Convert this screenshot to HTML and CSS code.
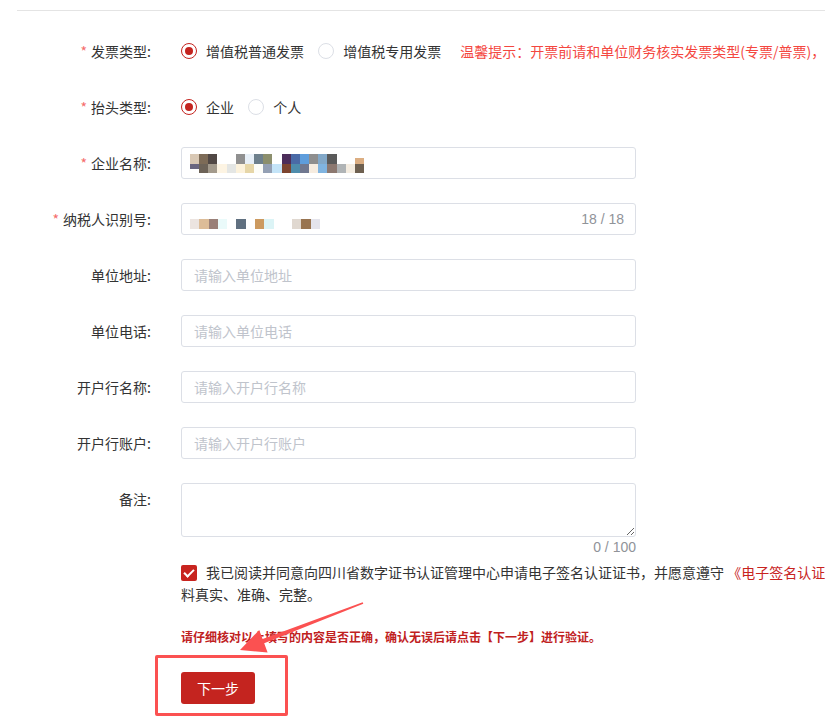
FILE: index.html
```html
<!DOCTYPE html>
<html lang="zh-CN">
<head>
    <meta charset="UTF-8">
    <meta name="viewport" content="width=device-width, initial-scale=1.0">
    <title>开具发票</title>
    <link rel="stylesheet" href="styles.css">
</head>
<body>
<div class="page">
    <div class="tabs-line"></div>

    <form class="invoice-form">
        <div class="form-item">
            <label class="form-label required">发票类型:</label>
            <div class="form-control nowrap">
                <label class="radio checked"><span class="radio-dot"></span>增值税普通发票</label>
                <label class="radio"><span class="radio-dot"></span>增值税专用发票</label>
                <span class="tip">温馨提示：开票前请和单位财务核实发票类型(专票/普票)，以免开错发票。</span>
            </div>
        </div>

        <div class="form-item">
            <label class="form-label required">抬头类型:</label>
            <div class="form-control nowrap">
                <label class="radio checked"><span class="radio-dot"></span>企业</label>
                <label class="radio"><span class="radio-dot"></span>个人</label>
            </div>
        </div>

        <div class="form-item">
            <label class="form-label required">企业名称:</label>
            <div class="form-control">
                <!-- 已打码的企业名称 -->
                <div class="input masked">
                    <svg class="mosaic" width="174" height="19" viewBox="0 0 19 2" preserveAspectRatio="none" shape-rendering="crispEdges">
                        <rect x="0" y="0" width="1" height="1" fill="#d9c8b4"/>
                        <rect x="1" y="0" width="1" height="1" fill="#7d6b57"/>
                        <rect x="2" y="0" width="1" height="1" fill="#514845"/>
                        <rect x="5" y="0" width="1" height="1" fill="#909090"/>
                        <rect x="6" y="0" width="1" height="1" fill="#e8f0f8"/>
                        <rect x="7" y="0" width="1" height="1" fill="#6e808c"/>
                        <rect x="8" y="0" width="1" height="1" fill="#8c8f6d"/>
                        <rect x="10" y="0" width="1" height="1" fill="#4c2d5a"/>
                        <rect x="11" y="0" width="1" height="1" fill="#4a6aa6"/>
                        <rect x="12" y="0" width="1" height="1" fill="#5e9ddc"/>
                        <rect x="13" y="0" width="1" height="1" fill="#8e8e8e"/>
                        <rect x="14" y="0" width="1" height="1" fill="#82a8c8"/>
                        <rect x="15" y="0" width="1" height="1" fill="#5a5a5a"/>
                        <rect x="18" y="0.4" width="1" height="0.6" fill="#dcae82"/>
                        <rect x="0" y="1" width="1" height="0.6" fill="#6a6680"/>
                        <rect x="1" y="1" width="1" height="1" fill="#6d6358"/>
                        <rect x="2" y="1" width="1" height="1" fill="#a39a8c"/>
                        <rect x="3" y="1" width="1" height="1" fill="#fdf4e3"/>
                        <rect x="4" y="1" width="1" height="1" fill="#e4e6e4"/>
                        <rect x="5" y="1" width="1" height="1" fill="#fcf2dc"/>
                        <rect x="6" y="1" width="1" height="1" fill="#e6d6a8"/>
                        <rect x="7" y="1" width="1" height="1" fill="#fdfdf8"/>
                        <rect x="8" y="1" width="1" height="1" fill="#94a0b4"/>
                        <rect x="9" y="1" width="1" height="1" fill="#c4e4f8"/>
                        <rect x="10" y="1" width="1" height="1" fill="#7c4430"/>
                        <rect x="11" y="1" width="1" height="1" fill="#4e8cac"/>
                        <rect x="12" y="1" width="1" height="1" fill="#707890"/>
                        <rect x="13" y="1" width="1" height="1" fill="#f6ece0"/>
                        <rect x="14" y="1" width="1" height="1" fill="#80b4e0"/>
                        <rect x="15" y="1" width="1" height="1" fill="#8c7870"/>
                        <rect x="16" y="1" width="1" height="1" fill="#b0b4b6"/>
                        <rect x="17" y="1" width="1" height="1" fill="#f4ece0"/>
                        <rect x="18" y="1" width="1" height="1" fill="#6e6050"/>
                    </svg>
                </div>
            </div>
        </div>

        <div class="form-item">
            <label class="form-label required">纳税人识别号:</label>
            <div class="form-control">
                <div class="input masked">
                    <svg class="mosaic" width="130" height="20" viewBox="0 0 14 2" preserveAspectRatio="none" shape-rendering="crispEdges">
                        <rect x="0" y="1" width="1" height="1" fill="#ece4e0"/>
                        <rect x="1" y="1" width="1" height="1" fill="#dcbc98"/>
                        <rect x="2" y="1" width="1" height="1" fill="#9a8078"/>
                        <rect x="3" y="1" width="1" height="1" fill="#eafafa"/>
                        <rect x="5" y="1" width="1" height="1" fill="#607080"/>
                        <rect x="7" y="1" width="1" height="1" fill="#cc9a60"/>
                        <rect x="8" y="1" width="1" height="1" fill="#dcf4f6"/>
                        <rect x="11" y="1" width="1" height="1" fill="#e0d8d0"/>
                        <rect x="12" y="1" width="1" height="1.1" fill="#987450"/>
                        <rect x="13" y="1" width="1" height="1" fill="#e4e4ec"/>
                    </svg>
                    <span class="count">18 / 18</span>
                </div>
            </div>
        </div>

        <div class="form-item">
            <label class="form-label">单位地址:</label>
            <div class="form-control">
                <input class="input" type="text" placeholder="请输入单位地址">
            </div>
        </div>

        <div class="form-item">
            <label class="form-label">单位电话:</label>
            <div class="form-control">
                <input class="input" type="text" placeholder="请输入单位电话">
            </div>
        </div>

        <div class="form-item">
            <label class="form-label">开户行名称:</label>
            <div class="form-control">
                <input class="input" type="text" placeholder="请输入开户行名称">
            </div>
        </div>

        <div class="form-item">
            <label class="form-label">开户行账户:</label>
            <div class="form-control">
                <input class="input" type="text" placeholder="请输入开户行账户">
            </div>
        </div>

        <div class="form-item remark-item">
            <label class="form-label">备注:</label>
            <div class="form-control">
                <textarea class="textarea"></textarea>
                <div class="word-count">0 / 100</div>
            </div>
        </div>

        <div class="form-extra">
            <p class="agree"><span class="checkbox checked"></span>我已阅读并同意向四川省数字证书认证管理中心申请电子签名认证证书，并愿意遵守 <a class="link">《电子签名认证业务规则》</a>，并承诺所提交的资料真实、准确、完整。</p>
            <p class="note">请仔细核对以上填写的内容是否正确，确认无误后请点击【下一步】进行验证。</p>
            <button type="button" class="btn-next">下一步</button>
        </div>
    </form>

    <!-- 标注：箭头和框 -->
    <div class="mark-box"></div>
    <svg class="mark-arrow" width="825" height="727" viewBox="0 0 825 727">
        <polygon fill="#fb5151" points="362.7,602.3 262.6,639.1 259.2,630 240,650 267.6,652.4 264.2,643.3 363.3,603.7"/>
    </svg>
</div>
</body>
</html>
```

FILE: styles.css
```css
html, body {
    margin: 0;
    padding: 0;
    overflow: hidden;
    background: #fff;
}
body {
    font-family: "Noto Sans CJK SC", sans-serif;
    font-size: 14px;
    color: #333;
}
.page {
    position: relative;
    width: 825px;
    height: 727px;
    overflow: hidden;
}
.tabs-line {
    margin-left: 17px;
    height: 10px;
    border-bottom: 1px solid #e4e4e4;
}
.invoice-form {
    width: 1100px;
    padding-top: 24px;
}
.form-item {
    display: flex;
    align-items: flex-start;
    margin-bottom: 24px;
}
.form-label {
    flex: none;
    width: 151px;
    margin-right: 30px;
    text-align: right;
    line-height: 32px;
    color: #333;
}
.form-label.required::before {
    content: '*';
    color: #f56c6c;
    margin-right: 4px;
}
.form-control {
    flex: none;
    width: 455px;
    line-height: 32px;
}
.nowrap {
    white-space: nowrap;
}

/* 单选 */
.radio {
    display: inline-flex;
    align-items: center;
    margin-right: 11px;
    cursor: pointer;
    vertical-align: top;
}
.radio-dot {
    display: inline-flex;
    align-items: center;
    justify-content: center;
    width: 16px;
    height: 16px;
    box-sizing: border-box;
    border: 1px solid #dcdfe6;
    border-radius: 50%;
    margin-right: 9px;
}
.radio.checked .radio-dot {
    border-color: #c4241f;
}
.radio.checked .radio-dot::after {
    content: '';
    width: 8px;
    height: 8px;
    border-radius: 50%;
    background: #c4241f;
}
.tip {
    margin-left: 5px;
    color: #f4473f;
}

/* 输入框 */
.input {
    display: flex;
    align-items: center;
    width: 100%;
    height: 32px;
    box-sizing: border-box;
    padding: 0 11px 0 12px;
    border: 1px solid #dcdfe6;
    border-radius: 3px;
    font: inherit;
    color: #333;
    outline: none;
    background: #fff;
}
.input::placeholder {
    color: #c0c4cc;
}
.input.masked {
    padding-left: 8px;
}
.mosaic {
    display: block;
}
.count {
    margin-left: auto;
    font-family: "Liberation Sans", Arial, sans-serif;
    color: #909399;
}
.textarea {
    display: block;
    width: 100%;
    height: 54px;
    box-sizing: border-box;
    padding: 5px 12px;
    border: 1px solid #dcdfe6;
    border-radius: 3px;
    font: inherit;
    resize: vertical;
    outline: none;
}
.remark-item {
    margin-bottom: 4px;
}
.word-count {
    text-align: right;
    line-height: 20px;
    font-family: "Liberation Sans", Arial, sans-serif;
    color: #909399;
}

/* 协议、提示、按钮 */
.form-extra {
    margin-left: 181px;
    width: 836px;
}
.agree {
    margin: 0;
    line-height: 22px;
    color: #333;
}
.checkbox {
    display: inline-block;
    position: relative;
    width: 16px;
    height: 16px;
    margin-right: 9px;
    border-radius: 2px;
    background: #c8241f;
    vertical-align: -3px;
}
.checkbox.checked::after {
    content: '';
    position: absolute;
    left: 5px;
    top: 2px;
    width: 4px;
    height: 8px;
    border: solid #fff;
    border-width: 0 2px 2px 0;
    transform: rotate(45deg);
}
.link {
    color: #c8241f;
    cursor: pointer;
}
.note {
    margin: 22px 0 0;
    font-size: 12px;
    font-weight: bold;
    line-height: 20px;
    color: #c0211e;
}
.btn-next {
    display: block;
    margin-top: 25px;
    width: 74px;
    height: 32px;
    border: none;
    border-radius: 3px;
    background: #c4241f;
    color: #fff;
    font: inherit;
    cursor: pointer;
}

/* 标注 */
.mark-box {
    position: absolute;
    left: 155px;
    top: 655px;
    width: 133px;
    height: 61px;
    box-sizing: border-box;
    border: 3px solid #fb5151;
    border-radius: 2px;
}
.mark-arrow {
    position: absolute;
    left: 0;
    top: 0;
    pointer-events: none;
}
```
